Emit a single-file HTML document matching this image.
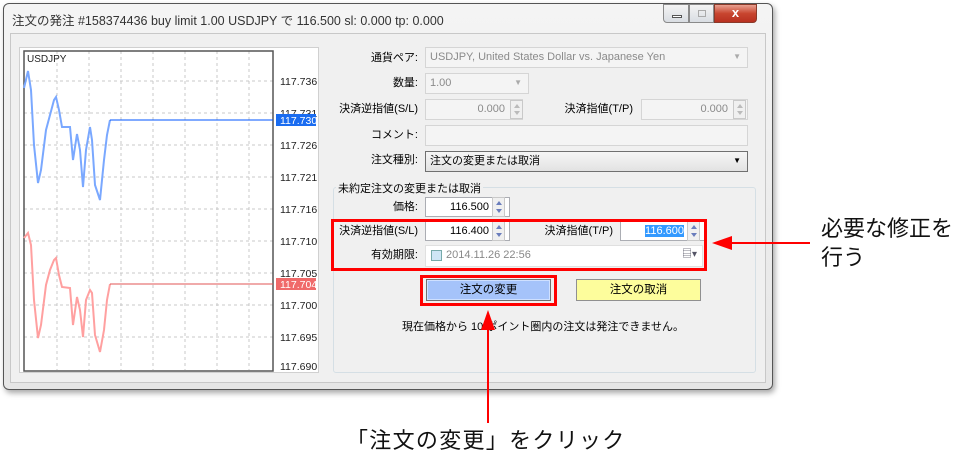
<!DOCTYPE html>
<html><head><meta charset="utf-8"><style>
*{margin:0;padding:0;box-sizing:border-box}
body{width:964px;height:459px;background:#fff;position:relative;overflow:hidden;font-family:"Liberation Sans","Noto Sans CJK JP",sans-serif;font-size:11px;color:#000}
.a{position:absolute}
.win{left:3px;top:3px;width:770px;height:387px;border:1px solid #555;border-radius:6px;background:linear-gradient(#f4f4f4,#e6e6e6);box-shadow:2px 3px 6px rgba(0,0,0,.35)}
.inner{left:10px;top:33px;width:756px;height:350px;background:#f0f0f0;border:1px solid #c8c8c8}
.lbl{position:absolute;text-align:right;width:140px;font-size:11px;line-height:14px;white-space:nowrap}
.inp{position:absolute;background:#fff;border:1px solid #abadb3;font-size:11px;line-height:18px;padding:0 4px;white-space:nowrap;overflow:hidden}
.dis{background:#f4f4f4;border-color:#d5d5d5;color:#8a8a8a}
.sp{position:absolute;width:13px;border:1px solid #c9c9c9;background:#f0f0f0;overflow:hidden}
.sp i{position:absolute;left:3px;width:0;height:0;border-left:3px solid transparent;border-right:3px solid transparent}
.sp .u{top:3px;border-bottom:4px solid #6a7dbc}
.sp .d{bottom:3px;border-top:4px solid #6a7dbc}
.sp.g .u{border-bottom-color:#bbb}.sp.g .d{border-top-color:#bbb}
</style></head><body>
<div class="a win"></div>
<div class="a" style="left:12px;top:10px;font-size:12.5px;color:#333">注文の発注 #158374436 buy limit 1.00 USDJPY で 116.500 sl: 0.000 tp: 0.000</div>
<div class="a" style="left:663px;top:4px;width:26px;height:19px;border:1px solid #8a8a8a;border-radius:0 0 0 4px;background:linear-gradient(#f4f4f4,#d9dde3)"><div class="a" style="left:8px;top:10px;width:10px;height:3px;border:1px solid #555;background:#fff"></div></div>
<div class="a" style="left:689px;top:4px;width:25px;height:19px;border:1px solid #8a8a8a;background:linear-gradient(#f4f4f4,#d9dde3)"><div class="a" style="left:8px;top:5px;width:8px;height:7px;border:1px solid #aaa"></div></div>
<div class="a" style="left:714px;top:4px;width:43px;height:19px;border:1px solid #8a3a2a;border-radius:0 0 4px 0;background:linear-gradient(#e8a090,#c8452f 50%,#b83020);color:#fff;font-weight:bold;font-size:13px;text-align:center;line-height:16px">x</div>
<div class="a inner"></div>
<div class="a" style="left:19px;top:47px;width:300px;height:326px;background:#fff;border:1px solid #d0d0d0"></div>
<svg class="a" style="left:0;top:0" width="330" height="390">
<g stroke="#c8c8c8" stroke-dasharray="3,3" stroke-width="1">
<line x1="57" y1="51" x2="57" y2="370"/><line x1="89" y1="51" x2="89" y2="370"/><line x1="121" y1="51" x2="121" y2="370"/><line x1="153" y1="51" x2="153" y2="370"/><line x1="185" y1="51" x2="185" y2="370"/><line x1="217" y1="51" x2="217" y2="370"/><line x1="249" y1="51" x2="249" y2="370"/>
<line x1="24" y1="81" x2="273" y2="81"/><line x1="24" y1="113" x2="273" y2="113"/><line x1="24" y1="145" x2="273" y2="145"/><line x1="24" y1="177" x2="273" y2="177"/><line x1="24" y1="209" x2="273" y2="209"/><line x1="24" y1="241" x2="273" y2="241"/><line x1="24" y1="273" x2="273" y2="273"/><line x1="24" y1="305" x2="273" y2="305"/><line x1="24" y1="337" x2="273" y2="337"/>
</g>
<rect x="24" y="51" width="249" height="320" fill="none" stroke="#555" stroke-width="1.5"/>
<polyline fill="none" stroke="#7aa8ff" stroke-width="2" points="24,88 28,71 31,90 34,145 38,183 41,170 46,130 50,115 54,100 56,97 59,110 62,127 70,127 73,160 77,134 80,150 83,187 86,150 90,127 92,140 95,185 100,200 104,160 107,135 110,120"/>
<polyline fill="none" stroke="#0055ff" stroke-width="1" points="110,120 273,120"/>
<polyline fill="none" stroke="#ffa0a0" stroke-width="2" points="24,238 28,233 31,245 34,300 38,338 41,325 46,285 50,270 54,260 56,258 59,275 62,287 70,288 73,325 77,297 80,310 83,337 86,300 90,290 92,293 95,335 100,352 104,330 107,300 110,284"/>
<polyline fill="none" stroke="#e05555" stroke-width="1" points="110,284 273,284"/>
<g font-size="10.5" font-family="Liberation Sans,sans-serif" fill="#222">
<text x="280" y="85">117.736</text><text x="280" y="117">117.731</text><text x="280" y="149">117.726</text><text x="280" y="181">117.721</text><text x="280" y="213">117.716</text><text x="280" y="245">117.710</text><text x="280" y="277">117.705</text><text x="280" y="309">117.700</text><text x="280" y="341">117.695</text><text x="280" y="370">117.690</text>
<text x="27" y="62" font-size="10">USDJPY</text>
</g>
<rect x="276" y="114" width="40" height="12" fill="#1a6cf0"/><text x="280" y="124" font-size="10.5" fill="#fff" font-family="Liberation Sans,sans-serif">117.730</text>
<rect x="276" y="278" width="40" height="12" fill="#f06a6a"/><text x="280" y="288" font-size="10.5" fill="#fff" font-family="Liberation Sans,sans-serif">117.704</text>
</svg>
<div class="lbl" style="left:278px;top:51px">通貨ペア:</div>
<div class="inp dis" style="left:425px;top:47px;width:323px;height:21px">USDJPY, United States Dollar vs. Japanese Yen<span style="position:absolute;right:6px;color:#aaa;font-size:8px">▼</span></div>
<div class="lbl" style="left:278px;top:76px">数量:</div>
<div class="inp dis" style="left:425px;top:73px;width:104px;height:21px">1.00<span style="position:absolute;right:6px;color:#aaa;font-size:8px">▼</span></div>
<div class="lbl" style="left:278px;top:102px">決済逆指値(S/L)</div>
<div class="inp dis" style="left:425px;top:99px;width:98px;height:21px;text-align:right;padding-right:17px">0.000</div>
<div class="sp g" style="left:510px;top:100px;height:19px"><i class="u"></i><i class="d"></i></div>
<div class="lbl" style="left:493px;top:102px">決済指値(T/P)</div>
<div class="inp dis" style="left:641px;top:99px;width:107px;height:21px;text-align:right;padding-right:19px">0.000</div>
<div class="sp g" style="left:733px;top:100px;height:19px"><i class="u"></i><i class="d"></i></div>
<div class="lbl" style="left:278px;top:128px">コメント:</div>
<div class="inp dis" style="left:425px;top:125px;width:323px;height:21px"></div>
<div class="lbl" style="left:278px;top:153px">注文種別:</div>
<div class="inp" style="left:425px;top:151px;width:323px;height:21px;border-color:#707070;background:linear-gradient(#f6f6f6,#e2e2e2)">注文の変更または取消<span style="position:absolute;right:6px;font-size:8px">▼</span></div>
<div class="a" style="left:333px;top:187px;width:423px;height:186px;border:1px solid #d5dfe5;border-radius:3px"></div>
<div class="a" style="left:336px;top:180px;background:#f0f0f0;padding:0 2px;font-size:11px">未約定注文の変更または取消</div>
<div class="lbl" style="left:278px;top:200px">価格:</div>
<div class="inp" style="left:425px;top:197px;width:85px;height:20px;text-align:right;padding-right:20px">116.500</div>
<div class="sp" style="left:492px;top:197px;height:20px"><i class="u"></i><i class="d"></i></div>
<div class="lbl" style="left:278px;top:224px">決済逆指値(S/L)</div>
<div class="inp" style="left:425px;top:221px;width:85px;height:20px;text-align:right;padding-right:20px">116.400</div>
<div class="sp" style="left:492px;top:221px;height:20px"><i class="u"></i><i class="d"></i></div>
<div class="lbl" style="left:473px;top:224px">決済指値(T/P)</div>
<div class="inp" style="left:620px;top:221px;width:85px;height:20px;text-align:right;padding-right:20px"><span style="background:#3399ff;color:#fff">116.600</span></div>
<div class="sp" style="left:687px;top:221px;height:20px"><i class="u"></i><i class="d"></i></div>
<div class="lbl" style="left:278px;top:248px">有効期限:</div>
<div class="inp" style="left:425px;top:245px;width:278px;height:22px;color:#888;padding-left:20px;border-color:#e0e0e0">2014.11.26 22:56<span class="a" style="left:5px;top:4px;width:11px;height:11px;border:1px solid #7aa;background:#cfe6f5"></span><span class="a" style="right:5px;top:0;color:#556;font-size:10px">▤▾</span></div>
<div class="a" style="left:331px;top:219px;width:376px;height:52px;border:3px solid #f00"></div>
<div class="a" style="left:420px;top:275px;width:137px;height:31px;border:3px solid #f00"></div>
<div class="a" style="left:426px;top:279px;width:125px;height:22px;border:1px solid #707070;background:#a5c3fa;box-shadow:inset 0 0 0 1px #cfe0ff;text-align:center;line-height:20px;font-size:11.5px">注文の変更</div>
<div class="a" style="left:576px;top:279px;width:125px;height:22px;border:1px solid #909090;background:#fdfd9c;text-align:center;line-height:20px;font-size:11.5px">注文の取消</div>
<div class="a" style="left:402px;top:318px;font-size:11px">現在価格から 10 ポイント圏内の注文は発注できません。</div>
<div class="a" style="left:730px;top:242px;width:80px;height:2px;background:#f00"></div>
<div class="a" style="left:712px;top:236px;width:0;height:0;border-top:7px solid transparent;border-bottom:7px solid transparent;border-right:20px solid #f00"></div>
<div class="a" style="left:487px;top:328px;width:2px;height:95px;background:#f00"></div>
<div class="a" style="left:481px;top:310px;width:0;height:0;border-left:7px solid transparent;border-right:7px solid transparent;border-bottom:20px solid #f00"></div>
<div class="a" style="left:821px;top:214px;font-size:22px;line-height:29px;color:#111">必要な修正を<br>行う</div>
<div class="a" style="left:346px;top:426px;font-size:22px;line-height:29px;letter-spacing:1.3px;color:#111">「注文の変更」をクリック</div>
</body></html>
